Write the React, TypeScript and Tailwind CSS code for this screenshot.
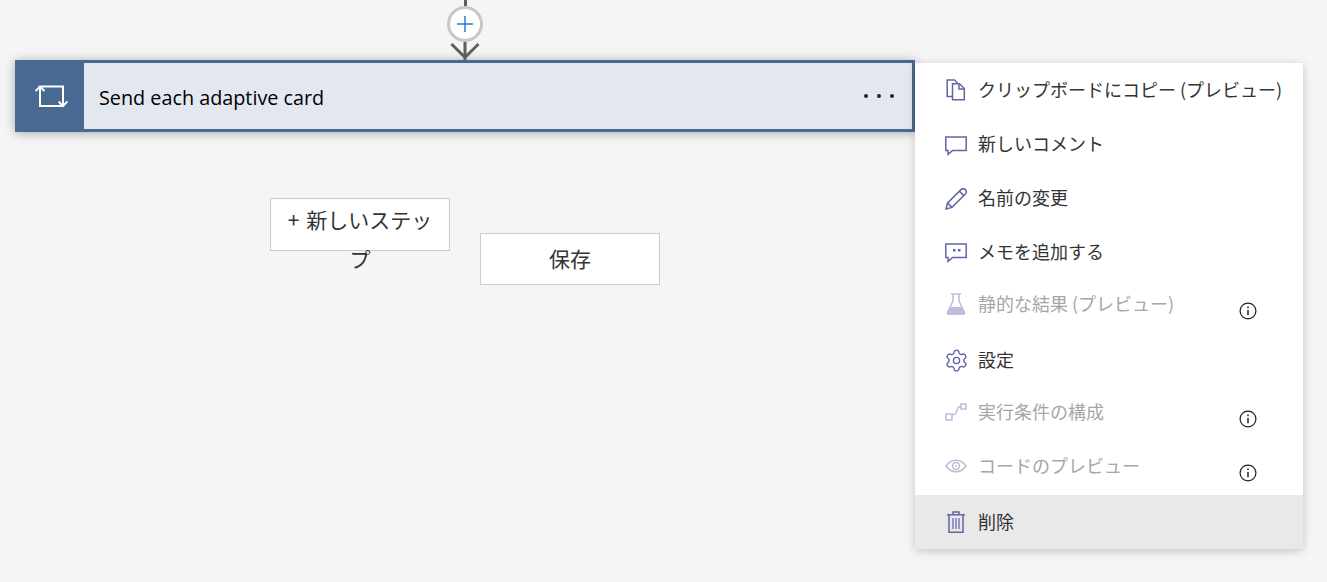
import type { ReactNode } from "react";
import { Settings } from "lucide-react";

const jp = "font-['Noto_Sans_CJK_JP','Noto_Sans',sans-serif]";

function CopyIcon() {
    return (
        <svg width="20" height="22" viewBox="0 0 20 22" fill="none" stroke="currentColor" strokeWidth="1.5">
            <path d="M6.5 17.5H1.2V1h7.3l3 3" />
            <path d="M6.5 4.7h7l4.8 4.8v11.3H6.500z" />
            <path d="M13 4.700v5.300h5.300" />
        </svg>
    );
}

function CommentIcon() {
    return (
        <svg className="mt-[3px]" width="22" height="20" viewBox="0 0 22 20" fill="none" stroke="currentColor" strokeWidth="1.5">
            <path d="M.8 1h20.400v13.400H7.600l-4.600 4v-4H.8z" />
        </svg>
    );
}

function PencilIcon() {
    return (
        <svg className="mt-[2px]" width="22" height="22" viewBox="0 0 22 22" fill="none" stroke="currentColor" strokeWidth="1.5">
            <path d="M1 21l1.600-6L16 1.600a2.600 2.600 0 0 1 4.400 4.400L7 19.400z" />
            <path d="M2.600 15L7 19.400M14.400 3.200l4.400 4.400" />
        </svg>
    );
}

function MemoIcon() {
    return (
        <svg className="mt-[2px]" width="22" height="20" viewBox="0 0 22 20" fill="none" stroke="currentColor" strokeWidth="1.5">
            <path d="M.8 1h20.400v13.400H7.600l-4.600 4v-4H.8z" />
            <path d="M8 6h2.500v2.500H8zM13 6h2.500v2.500H13z" fill="currentColor" stroke="none" />
        </svg>
    );
}

function FlaskIcon() {
    return (
        <svg width="20" height="22" viewBox="0 0 20 22" fill="none" stroke="currentColor" strokeWidth="1.5">
            <path d="M5 1h10M7 1v7L1.600 19a1.400 1.400 0 0 0 1.200 2h14.400a1.400 1.400 0 0 0 1.200-2L13 8V1" />
            <path d="M4.600 14h10.800l3.600 6v1.600H1v-1.600z" fill="currentColor" stroke="none" />
        </svg>
    );
}

function RunAfterIcon() {
    return (
        <svg width="22" height="18" viewBox="0 0 22 18" fill="none" stroke="currentColor" strokeWidth="1.5">
            <path d="M1 11h6v6H1zM16 1h5v5h-5zM7 12l3.500-1 3-7 2.500-.5" />
        </svg>
    );
}

function EyeIcon() {
    return (
        <svg width="22" height="14" viewBox="0 0 22 14" fill="none" stroke="currentColor" strokeWidth="1.5">
            <path d="M1 7c2.500-3.800 6-5.800 10-5.800S18.500 3.200 21 7c-2.500 3.800-6 5.800-10 5.800S3.500 10.800 1 7z" />
            <circle cx="11" cy="7" r="3.400" />
            <circle cx="11" cy="7" r="1" fill="currentColor" stroke="none" />
        </svg>
    );
}

function TrashIcon() {
    return (
        <svg width="18" height="22" viewBox="0 0 18 22" fill="none" stroke="currentColor" strokeWidth="1.5">
            <path d="M0 3.700h18M6 3.700V1h6v2.700M2 3.700v17.500h14V3.700" />
            <path d="M6 7v11M9 7v11M12 7v11" strokeWidth="1.200" />
        </svg>
    );
}

function InfoIcon() {
    return (
        <svg width="18" height="18" viewBox="0 0 18 18" fill="none" stroke="#1f1f1f" strokeWidth="1.200">
            <circle cx="9" cy="9" r="7.900" />
            <path d="M9 8v5.200" strokeWidth="1.500" />
            <path d="M9 4.400v1.800" strokeWidth="1.500" />
        </svg>
    );
}

function LoopIcon() {
    return (
        <svg className="ml-[4px]" width="33" height="24" viewBox="0 0 33 24" fill="none" stroke="white" strokeWidth="2">
            <path d="M.6 7L5 2.400 9.400 7M5 3v19h22" />
            <path d="M32.400 17.500L28 22l-4.400-4.500M28 21V2.600H6" />
        </svg>
    );
}

type RowProps = {
    icon: ReactNode;
    label: string;
    disabled?: boolean;
    active?: boolean;
};

function MenuRow({ icon, label, disabled, active }: RowProps) {
    return (
        <div className={`flex h-[54px] items-center pl-[30px] ${active ? "bg-[#e9e9e9]" : ""}`}>
            <span className={`flex w-[22px] items-center justify-center ${disabled ? "-mt-1 text-[#bcbcdc]" : "text-[#6264a7]"}`}>
                {icon}
            </span>
            <span className={`ml-[11px] whitespace-nowrap text-[18px] ${disabled ? "-mt-[6px] text-[#a6a6a6]" : "pb-[2px] text-[#333333]"}`}>
                {label}
            </span>
            {disabled && (
                <span className="absolute left-[324px] mt-[10px] flex">
                    <InfoIcon />
                </span>
            )}
        </div>
    );
}

export default function App() {
    return (
        <main className={`relative h-[582px] w-[1327px] overflow-hidden bg-[#f5f5f5] ${jp}`}>
            <div className="ml-[15px] flex w-[900px] flex-col items-center">
                <div className="h-[6px] w-[3px] bg-[#5f5f5f]" />
                <div className="flex h-[36px] w-[36px] items-center justify-center rounded-full border-[3px] border-[#c8c8c8] bg-white">
                    <svg width="16" height="16" viewBox="0 0 16 16" stroke="#2b79d6" strokeWidth="1.500">
                        <path d="M8 0v16M0 8h16" />
                    </svg>
                </div>
                <svg width="30" height="18" viewBox="0 0 30 18" fill="none" stroke="#5f5f5f" strokeWidth="3">
                    <path d="M1.500 2L15 15.500 28.500 2M15 0v18" />
                </svg>
            </div>

            <div className="ml-[15px] flex h-[72px] w-[900px] border-[3px] border-[#486991] shadow-[0_1px_10px_rgba(0,0,0,0.32)]">
                <div className="-ml-[3px] flex w-[69px] items-center justify-center bg-[#486991]">
                    <LoopIcon />
                </div>
                <div className="flex flex-1 items-center justify-between bg-[#e3e8f0] pl-[15px] pr-[18px]">
                    <span className="mt-[4px] font-['Open_Sans',sans-serif] text-[19.8px] text-black">Send each adaptive card</span>
                    <span className="flex gap-[9px]">
                        <i className="h-[4px] w-[4px] rounded-full bg-[#222222]" />
                        <i className="h-[4px] w-[4px] rounded-full bg-[#222222]" />
                        <i className="h-[4px] w-[4px] rounded-full bg-[#222222]" />
                    </span>
                </div>
            </div>

            <div className="ml-[270px] mt-[66px] flex items-start gap-[30px] text-[21px] text-[#333333]">
                <div className="h-[53px] w-[180px] border border-[#cccccc] bg-white px-[15px] pt-[1px] text-center leading-[39px] [word-spacing:2px]">
                    + 新しいステップ
                </div>
                <div className="mt-[35px] h-[52px] w-[180px] border border-[#cccccc] bg-white text-center leading-[49px]">保存</div>
            </div>

            <div className="absolute left-[915px] top-[63px] w-[388px] rounded-r-[2px] bg-white shadow-[0_2px_10px_rgba(0,0,0,0.2)]">
                <MenuRow icon={<CopyIcon />} label="クリップボードにコピー (プレビュー)" />
                <MenuRow icon={<CommentIcon />} label="新しいコメント" />
                <MenuRow icon={<PencilIcon />} label="名前の変更" />
                <MenuRow icon={<MemoIcon />} label="メモを追加する" />
                <MenuRow icon={<FlaskIcon />} label="静的な結果 (プレビュー)" disabled />
                <MenuRow icon={<Settings size={25} strokeWidth={1.3} className="shrink-0" />} label="設定" />
                <MenuRow icon={<RunAfterIcon />} label="実行条件の構成" disabled />
                <MenuRow icon={<EyeIcon />} label="コードのプレビュー" disabled />
                <MenuRow icon={<TrashIcon />} label="削除" active />
            </div>
        </main>
    );
}
